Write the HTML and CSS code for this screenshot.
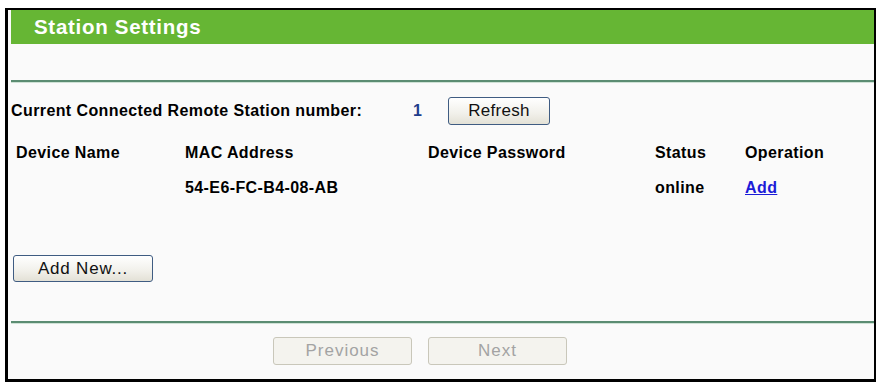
FILE: index.html
```html
<!DOCTYPE html>
<html lang="en">
<head>
  <meta charset="UTF-8">
  <title>Station Settings</title>
  <link rel="stylesheet" href="styles.css">
</head>
<body>
  <div class="frame">
    <!-- Title Bar -->
    <div class="title-bar">Station Settings</div>
    <div class="spacer"></div>
    <div class="rule"></div>

    <!-- Connected count -->
    <div class="count-row">
      <span class="count-label">Current Connected Remote Station number:</span>
      <span class="count-value">1</span>
      <button class="button refresh">Refresh</button>
    </div>

    <!-- Station list -->
    <table class="station-table">
      <colgroup>
        <col class="col-name">
        <col class="col-mac">
        <col class="col-pass">
        <col class="col-status">
        <col class="col-op">
      </colgroup>
      <tr>
        <th>Device Name</th>
        <th>MAC Address</th>
        <th>Device Password</th>
        <th>Status</th>
        <th>Operation</th>
      </tr>
      <tr>
        <td></td>
        <td>54-E6-FC-B4-08-AB</td>
        <td></td>
        <td>online</td>
        <td><a href="#">Add</a></td>
      </tr>
    </table>

    <button class="button add-new">Add New...</button>

    <div class="rule rule-bottom"></div>

    <!-- Navigation -->
    <div class="nav-row">
      <button class="button nav" disabled>Previous</button>
      <button class="button nav" disabled>Next</button>
    </div>
  </div>
</body>
</html>
```

FILE: styles.css
```css
/* General */
body {
  margin: 0;
  background: #ffffff;
  font-family: "Liberation Sans", Arial, sans-serif;
}

.frame {
  box-sizing: border-box;
  width: 871px;
  height: 374px;
  margin: 8px 0 0 5px;
  border: 2px solid #000;
  border-left-width: 3px;
  border-bottom-width: 3px;
  background: #fafafa;
}

/* Title Bar */
.title-bar {
  margin-left: 3px;
  height: 34px;
  line-height: 34px;
  padding-left: 23px;
  background: #66b634;
  color: #fff;
  font-weight: bold;
  font-size: 20.5px;
  letter-spacing: 0.7px;
}

.spacer {
  height: 36px;
}

.rule {
  margin-left: 3px;
  height: 2px;
  background: #5b8c72;
  border-bottom: 1px solid #cfe2d6;
}

/* Count row */
.count-row {
  display: flex;
  align-items: center;
  margin-top: 14px;
  padding-left: 3px;
  font-size: 16px;
  font-weight: bold;
  letter-spacing: 0.4px;
}

.count-label {
  width: 402px;
}

.count-value {
  width: 35px;
  color: #1e3c8c;
}

/* Buttons */
.button {
  box-sizing: border-box;
  height: 28px;
  border: 1px solid #3f5c82;
  border-radius: 3px;
  background: linear-gradient(#ffffff, #f1f0ea 60%, #e3e1d6);
  font-family: "Liberation Sans", Arial, sans-serif;
  font-size: 17px;
  letter-spacing: 0.3px;
  color: #111;
  padding: 0;
}

.refresh {
  width: 102px;
}

.add-new {
  display: block;
  width: 140px;
  height: 27px;
  margin: 50px 0 0 5px;
  letter-spacing: 0.8px;
}

/* Station table */
.station-table {
  table-layout: fixed;
  border-collapse: collapse;
  margin: 10px 0 0 8px;
  font-size: 16px;
  font-weight: bold;
  letter-spacing: 0.4px;
}

.station-table th,
.station-table td {
  height: 35px;
  padding: 0;
  text-align: left;
  white-space: nowrap;
}

.col-name { width: 169px; }
.col-mac { width: 243px; }
.col-pass { width: 227px; }
.col-status { width: 90px; }
.col-op { width: 100px; }

.station-table a {
  color: #1c1cd8;
  text-decoration: underline;
}

.rule-bottom {
  margin-top: 39px;
}

/* Navigation */
.nav-row {
  display: flex;
  gap: 16px;
  margin-top: 13px;
  padding-left: 265px;
}

.nav {
  width: 139px;
  border-color: #c9c7ba;
  background: #f4f3ee;
  color: #a3a3a3;
  letter-spacing: 1px;
}
```
